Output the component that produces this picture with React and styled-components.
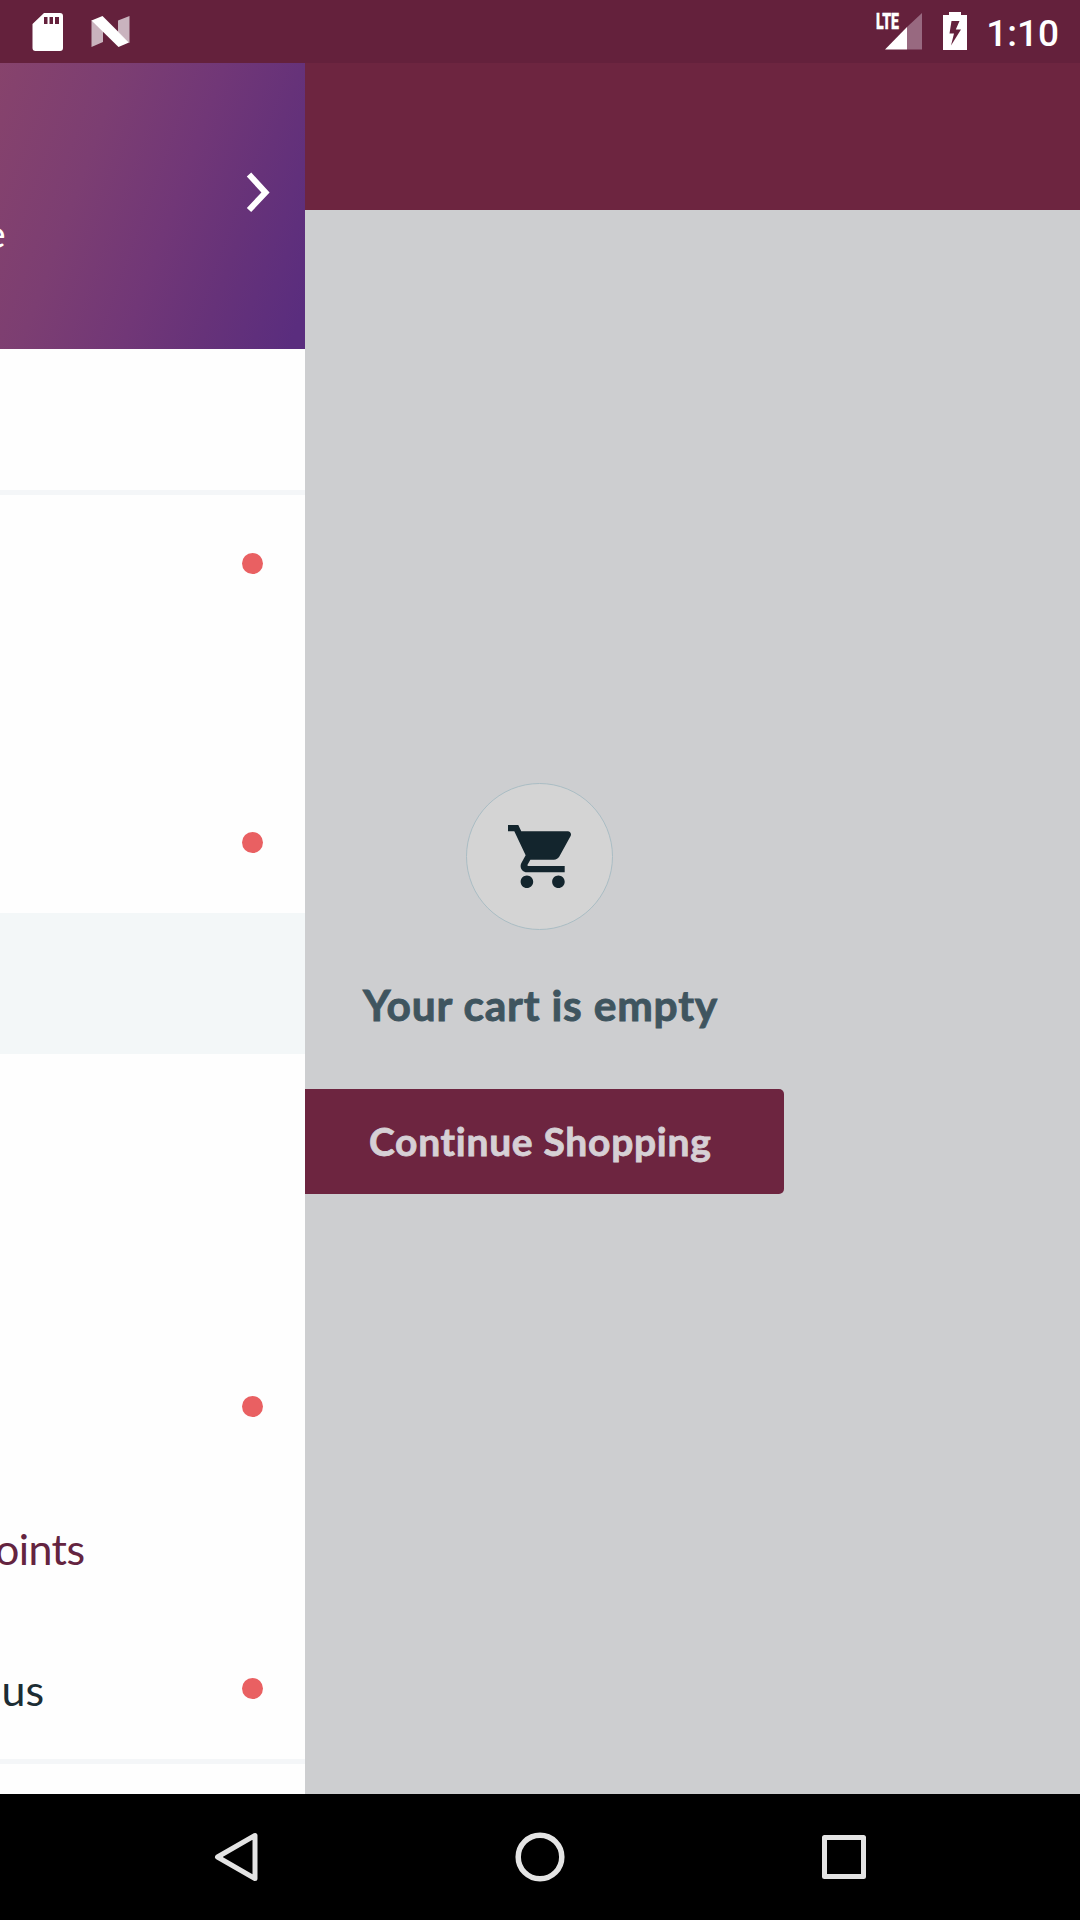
import React from "react";
import styled, { createGlobalStyle } from "styled-components";

const Global = createGlobalStyle`
  *, *::before, *::after { box-sizing: border-box; }
  body { margin: 0; background: #000; font-family: Lato, "Open Sans", sans-serif; font-variant-ligatures: none; }
`;

const Screen = styled.div`
  width: 1080px;
  height: 1920px;
  display: grid;
  grid-template-rows: 63px 1731px 126px;
  overflow: hidden;
`;

const StatusBar = styled.header`
  display: flex;
  justify-content: space-between;
  background: #64213c;
  color: #fff;
`;

const StatusGroup = styled.div`
  display: flex;
  align-items: flex-start;
  padding: ${(p) => p.$pad};
  gap: ${(p) => p.$gap};
`;

const Signal = styled.div`
  position: relative;
  width: 46px;
  height: 37px;
  svg { display: block; margin-left: 9px; }
`;

const NetworkType = styled.span`
  position: absolute;
  left: 0;
  top: 2px;
  font: 900 22px/16px Roboto, sans-serif;
  -webkit-text-stroke: 0.4px #fff;
  transform: scaleX(0.64);
  transform-origin: left;
`;

const Clock = styled.span`
  font: 500 37px/44px Roboto, sans-serif;
  margin-left: -1.5px;
`;

const Body = styled.div`
  display: grid;
  grid-template-columns: 305px 775px;
  min-height: 0;
`;

const Drawer = styled.aside`
  display: flex;
  flex-direction: column;
  overflow: hidden;
  background: #fefefe;
`;

const Profile = styled.div`
  height: 286px;
  flex: none;
  display: flex;
  justify-content: space-between;
  background: linear-gradient(110deg, #87436c 0%, #7c3e72 30%, #713777 55%, #663279 74%, #5a2d7e 96%);
  color: #fff;
`;

const ProfileText = styled.span`
  font-size: 39px;
  line-height: 44px;
  margin: 148px 0 0 -15px;
`;

const Chevron = styled.svg`
  margin: 107px 34px 0 0;
`;

const Row = styled.div`
  height: ${(p) => p.$h || 141}px;
  flex: none;
  display: flex;
  align-items: center;
  justify-content: space-between;
  padding-right: 42px;
  background: ${(p) => (p.$active ? "#f3f7f8" : "transparent")};
`;

const Divider = styled.div`
  height: 5px;
  flex: none;
  background: #f4f6f8;
`;

const Label = styled.span`
  font-size: 43px;
  line-height: 52px;
  margin-left: ${(p) => p.$x}px;
  padding-top: 2px;
  letter-spacing: ${(p) => p.$ls || 0}px;
  color: ${(p) => p.$color};
`;

const Dot = styled.i`
  width: 21px;
  height: 21px;
  margin-left: auto;
  border-radius: 50%;
  background: #e96062;
`;

const Page = styled.main`
  display: flex;
  flex-direction: column;
  background: #cdced0;
`;

const AppBar = styled.div`
  height: 147px;
  background: #6d2540;
`;

const EmptyCart = styled.section`
  width: 479px;
  padding-top: 573px;
  display: flex;
  flex-direction: column;
`;

const CartCircle = styled.div`
  width: 147px;
  height: 147px;
  margin-left: 161px;
  display: flex;
  align-items: center;
  justify-content: center;
  border: 1px solid #aabdc4;
  border-radius: 50%;
  background: #d4d4d4;
`;

const Title = styled.h1`
  height: 52px;
  margin: 49px 0 58px 58px;
  font-size: 42.5px;
  line-height: 52px;
  font-weight: 700;
  letter-spacing: 0.8px;
  white-space: nowrap;
  color: #3f555f;
  -webkit-text-stroke: 0.9px #3f555f;
`;

const Button = styled.button`
  height: 105px;
  padding: 0 0 1px 64px;
  border: 0;
  border-radius: 0 5px 5px 0;
  background: #6d2540;
  color: #d6d0d5;
  text-align: left;
  font: 700 39px/48px Lato, sans-serif;
  font-variant-ligatures: none;
  letter-spacing: 0.7px;
  -webkit-text-stroke: 0.8px #d6d0d5;
`;

const NavBar = styled.nav`
  display: flex;
  justify-content: center;
  align-items: center;
  gap: 214px;
  background: #000;
`;

const CartIcon = () => (
  <svg width="63" height="63" viewBox="1 2 20 20" fill="#13252d">
    <path d="M7 18c-1.1 0-1.99.9-1.99 2S5.9 22 7 22s2-.9 2-2-.9-2-2-2zM1 2v2h2l3.600 7.590-1.350 2.450c-.16.28-.25.61-.25.96 0 1.100.9 2 2 2h12v-2H7.420c-.14 0-.25-.11-.25-.25l.03-.12.9-1.630h7.450c.75 0 1.410-.41 1.750-1.030l3.580-6.490c.08-.14.12-.31.12-.48 0-.55-.45-1-1-1H5.210l-.94-2H1zm16 16c-1.100 0-1.990.9-1.990 2s.89 2 1.990 2 2-.9 2-2-.9-2-2-2z" />
  </svg>
);

const rows = [
  { h: 136, dot: true },
  {},
  { dot: true },
  { active: true },
  {},
  {},
  { dot: true },
  { label: "oints", color: "#642440", x: -5, ls: -0.6 },
  { label: "us", color: "#1c2d34", x: 1.5, dot: true },
];

export default function App() {
  return (
    <Screen>
      <Global />
      <StatusBar>
        <StatusGroup $pad="12px 0 0 32px" $gap="28px">
          <svg width="31" height="39" viewBox="0 0 31 39">
            <path fill="#fff" fillRule="evenodd" d="M12 1H28Q31 1 31 4V36Q31 39 28 39H3.500Q.5 39 .5 36V12ZM12 5V12H15.500V5ZM17.500 5V12H21V5ZM23 5V12H27V5Z" />
          </svg>
          <svg width="39" height="39" viewBox="0 0 39 39">
            <path fill="#c9b3be" d="M.5 8L12 18V30L.5 35ZM27 8.500L38.500 4V31L27 20Z" />
            <path fill="#fff" d="M.5 8.500L11.500 4L38 30.500L27.500 35Z" />
          </svg>
        </StatusGroup>
        <StatusGroup $pad="12px 21px 0 0" $gap="21px">
          <Signal>
            <NetworkType>LTE</NetworkType>
            <svg width="37" height="38" viewBox="0 0 37 38">
              <path fill="#986980" d="M22 15L37 1V37.500H22Z" />
              <path fill="#fff" d="M0 37.500L22 15V37.500Z" />
            </svg>
          </Signal>
          <svg width="24" height="38" viewBox="0 0 24 38">
            <path fill="#fff" fillRule="evenodd" d="M6 0H18V3H24V38H0V3H6ZM8.500 9L6.500 21.500H11L8 33.500L18 17.500H12.800L16.500 9Z" />
          </svg>
          <Clock>1:10</Clock>
        </StatusGroup>
      </StatusBar>
      <Body>
        <Drawer>
          <Profile>
            <ProfileText>e</ProfileText>
            <Chevron width="26" height="44" viewBox="0 0 26 44">
              <path d="M4 4.500L20.500 22.500L4 40" fill="none" stroke="#fff" strokeWidth="6" />
            </Chevron>
          </Profile>
          <Row />
          <Divider />
          {rows.map((r, i) => (
            <Row key={i} $h={r.h} $active={r.active}>
              {r.label && <Label $color={r.color} $x={r.x} $ls={r.ls}>{r.label}</Label>}
              {r.dot && <Dot />}
            </Row>
          ))}
          <Divider />
        </Drawer>
        <Page>
          <AppBar />
          <EmptyCart>
            <CartCircle><CartIcon /></CartCircle>
            <Title>Your cart is empty</Title>
            <Button>Continue Shopping</Button>
          </EmptyCart>
        </Page>
      </Body>
      <NavBar>
        <svg width="90" height="90" viewBox="0 0 90 90" fill="none" stroke="#e4e4e4" strokeWidth="5" strokeLinejoin="round">
          <path d="M64 23.500V66.500L26.500 45Z" />
        </svg>
        <svg width="90" height="90" viewBox="0 0 90 90" fill="none" stroke="#e4e4e4" strokeWidth="5.500">
          <circle cx="45" cy="45" r="21.800" />
        </svg>
        <svg width="90" height="90" viewBox="0 0 90 90" fill="none" stroke="#e4e4e4" strokeWidth="5" strokeLinejoin="round">
          <rect x="25.500" y="25.500" width="39" height="39" />
        </svg>
      </NavBar>
    </Screen>
  );
}
